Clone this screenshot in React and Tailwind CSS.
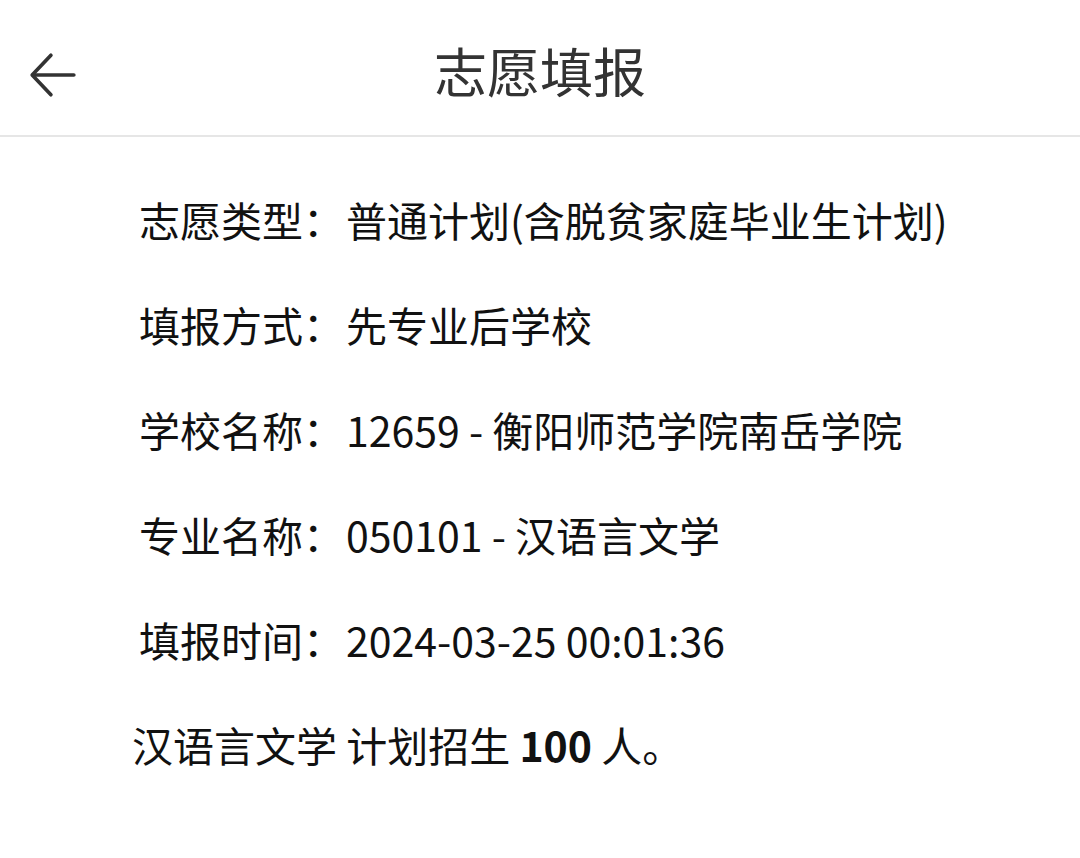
const ROWS = [
  { label: '志愿类型：', value: '普通计划(含脱贫家庭毕业生计划)' },
  { label: '填报方式：', value: '先专业后学校' },
  { label: '学校名称：', value: '12659 - 衡阳师范学院南岳学院' },
  { label: '专业名称：', value: '050101 - 汉语言文学' },
  { label: '填报时间：', value: '2024-03-25 00:01:36' },
];

function BackArrow() {
  return (
    <svg width="50" height="50" viewBox="0 0 48 48" fill="none" stroke="#333" strokeWidth="3.5" strokeLinecap="round" strokeLinejoin="round">
      <path d="M44 24H5" />
      <path d="M22 5L4 24l18 19" />
    </svg>
  );
}

export default function App() {
  return (
    <div className="w-[1080px] h-[858px] bg-white text-[#111] font-['Noto_Sans_CJK_SC','Noto_Sans',sans-serif] overflow-hidden">
      <header className="relative h-[137px] border-b-2 border-[#e6e6e6] flex items-center justify-center">
        <button className="absolute left-[28px] top-[50px]">
          <BackArrow />
        </button>
        <h1 className="text-[53px] leading-none text-[#333] mt-[6px]">志愿填报</h1>
      </header>

      <div className="pt-[30px] pl-[139px]">
        {ROWS.map((row) => (
          <div key={row.label} className="flex items-center h-[105px] text-[41px] whitespace-nowrap">
            <span>{row.label}</span>
            <span className="ml-[2px]">{row.value}</span>
          </div>
        ))}
      </div>
      <div className="pl-[132px] flex items-center h-[105px] text-[41px] whitespace-nowrap">
        <span>汉语言文学 计划招生 <b className="font-bold">100</b> 人。</span>
      </div>
    </div>
  );
}
